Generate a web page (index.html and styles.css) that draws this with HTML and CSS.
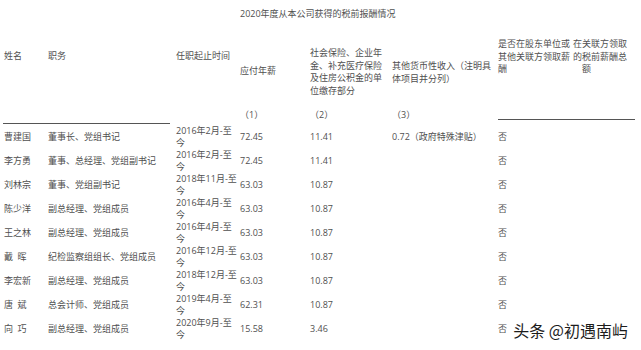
FILE: index.html
```html
<!DOCTYPE html>
<html lang="zh-CN">
<head>
  <meta charset="UTF-8"/>
  <meta name="viewport" content="width=device-width, initial-scale=1"/>
  <title>2020年度从本公司获得的税前报酬情况</title>
  <link rel="stylesheet" href="styles.css">
</head>
<body>
  <div class="sheet">
    <table class="pay">
      <colgroup>
        <col class="c-name"><col class="c-post"><col class="c-term"><col class="c-salary">
        <col class="c-social"><col class="c-other"><col class="c-related"><col class="c-total">
      </colgroup>
      <tr class="title-row">
        <td colspan="3"></td>
        <td colspan="5" class="title">2020年度从本公司获得的税前报酬情况</td>
      </tr>
      <tr class="head-row">
        <th class="h-left">姓名</th>
        <th class="h-left">职务</th>
        <th class="h-left">任职起止时间</th>
        <th class="h-salary">应付年薪</th>
        <th class="h-social">社会保险、企业年<br>金、补充医疗保险<br>及住房公积金的单<br>位缴存部分</th>
        <th class="h-other">其他货币性收入（注明具<br>体项目并分列）</th>
        <th class="h-right">是否在股东单位或<br>其他关联方领取薪<br>酬</th>
        <th class="h-right">在关联方领取<br>的税前薪酬总<br><span class="indent">额</span></th>
      </tr>
      <tr class="num-row">
        <td colspan="2" class="rule-cell"><div class="rule rule-left"></div></td>
        <td></td>
        <td>（1）</td>
        <td>（2）</td>
        <td>（3）</td>
        <td colspan="2" class="rule-cell"><div class="rule rule-right"></div></td>
      </tr>
      <tr class="row">
        <td>曹建国</td><td>董事长、党组书记</td><td class="term">2016年2月-至<br>今</td>
        <td>72.45</td><td>11.41</td><td>0.72（政府特殊津贴）</td><td>否</td><td></td>
      </tr>
      <tr class="row">
        <td>李方勇</td><td>董事、总经理、党组副书记</td><td class="term">2016年2月-至<br>今</td>
        <td>72.45</td><td>11.41</td><td></td><td>否</td><td></td>
      </tr>
      <tr class="row">
        <td>刘林宗</td><td>董事、党组副书记</td><td class="term">2018年11月-至<br>今</td>
        <td>63.03</td><td>10.87</td><td></td><td>否</td><td></td>
      </tr>
      <tr class="row">
        <td>陈少洋</td><td>副总经理、党组成员</td><td class="term">2016年4月-至<br>今</td>
        <td>63.03</td><td>10.87</td><td></td><td>否</td><td></td>
      </tr>
      <tr class="row">
        <td>王之林</td><td>副总经理、党组成员</td><td class="term">2016年4月-至<br>今</td>
        <td>63.03</td><td>10.87</td><td></td><td>否</td><td></td>
      </tr>
      <tr class="row">
        <td>戴&ensp;晖</td><td>纪检监察组组长、党组成员</td><td class="term">2016年12月-至<br>今</td>
        <td>63.03</td><td>10.87</td><td></td><td>否</td><td></td>
      </tr>
      <tr class="row">
        <td>李宏新</td><td>副总经理、党组成员</td><td class="term">2018年12月-至<br>今</td>
        <td>63.03</td><td>10.87</td><td></td><td>否</td><td></td>
      </tr>
      <tr class="row">
        <td>唐&ensp;斌</td><td>总会计师、党组成员</td><td class="term">2019年4月-至<br>今</td>
        <td>62.31</td><td>10.87</td><td></td><td>否</td><td></td>
      </tr>
      <tr class="row">
        <td>向&ensp;巧</td><td>副总经理、党组成员</td><td class="term">2020年9月-至<br>今</td>
        <td>15.58</td><td>3.46</td><td></td><td>否</td><td></td>
      </tr>
    </table>
    <div class="watermark">头条 @初遇南屿</div>
  </div>
</body>
</html>
```

FILE: styles.css
```css
* { box-sizing:border-box; margin:0; padding:0 }
html, body { width:100%; height:100%; background:#fff; overflow:hidden }
body {
  font-family:'Open Sans', 'Noto Sans CJK SC', sans-serif;
  font-size:9px; color:#505050;
}
.sheet { position:relative; width:641px; height:350px }

.pay { width:641px; table-layout:fixed; border-collapse:collapse; border-spacing:0 }
.pay td, .pay th {
  padding:0 0 0 4px; text-align:left; font-weight:normal;
  white-space:nowrap; overflow:visible;
}
.c-name { width:44px } .c-post { width:128px } .c-term { width:64px } .c-salary { width:70px }
.c-social { width:82px } .c-other { width:106px } .c-related { width:75px } .c-total { width:72px }

.title-row { height:28px }
.title-row td { vertical-align:middle; line-height:12px }

.head-row { height:76px }
.head-row th { vertical-align:top; line-height:12.5px }
.head-row .h-left { padding-top:22px }
.head-row .h-salary { padding-top:37px }
.head-row .h-social { padding-top:19px }
.head-row .h-other { padding-top:32px }
.head-row .h-right { padding-top:10px }
.indent { padding-left:9px }

.num-row { height:21px }
.num-row td { vertical-align:top; padding-top:5px; line-height:12.5px }
.num-row .rule-cell { padding:0 }
.rule { height:0; border-top:1px solid #555 }
.rule-left { margin:19px 2px 0 3px }
.rule-right { margin:15px 6px 0 4px }

.row { height:24px }
.row td { vertical-align:middle; line-height:12px }

.watermark {
  position:absolute; right:13px; bottom:10px;
  font-family:'Noto Sans CJK SC', sans-serif; font-size:16px; line-height:20px;
  color:#1c1c1c;
  text-shadow:0 0 2px #fff, 0 0 2px #fff, 0 0 3px #fff;
}
```
